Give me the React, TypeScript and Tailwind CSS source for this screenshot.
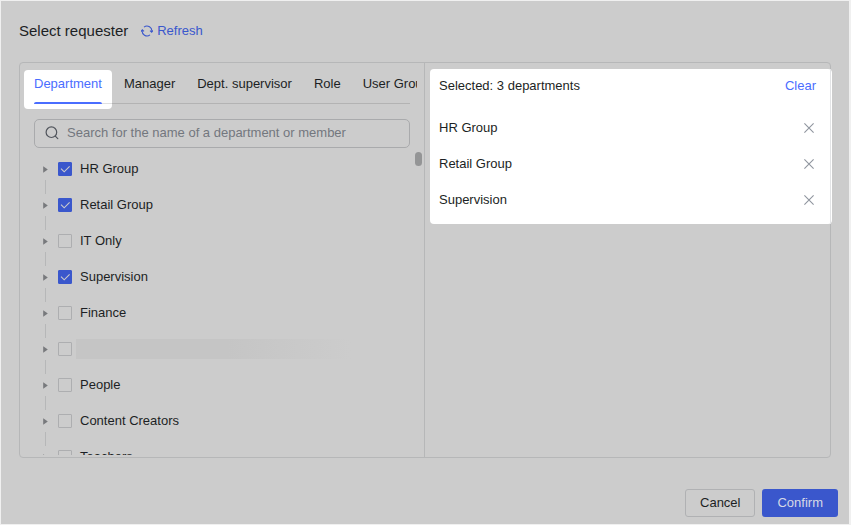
import { useState } from "react";

const tabs = ["Department", "Manager", "Dept. supervisor", "Role", "User Group"];

const departments = [
  { id: "hr", name: "HR Group" },
  { id: "retail", name: "Retail Group" },
  { id: "it", name: "IT Only" },
  { id: "supervision", name: "Supervision" },
  { id: "finance", name: "Finance" },
  { id: "hidden", name: "" },
  { id: "people", name: "People" },
  { id: "creators", name: "Content Creators" },
  { id: "teachers", name: "Teachers" },
];

function RefreshIcon() {
  return (
    <svg width="12" height="12" viewBox="0 0 12 12" fill="none" stroke="currentColor" strokeWidth="1.1">
      <path d="M3 2.1A4.9 4.9 0 0 1 10.8 6.8" />
      <path d="M9 9.9A4.9 4.9 0 0 1 1.2 5.2" />
      <path d="M9 5.6L10.7 7.2L12 5.4" />
      <path d="M3 6.4L1.3 4.8L0 6.6" />
    </svg>
  );
}

function SearchIcon() {
  return (
    <svg width="14" height="14" viewBox="0 0 14 14" fill="none" stroke="currentColor" strokeWidth="1.2" strokeLinecap="round">
      <circle cx="6.4" cy="6.2" r="5.3" />
      <path d="M10.3 10.1L12.8 12.6" />
    </svg>
  );
}

function CloseIcon() {
  return (
    <svg width="10" height="10" viewBox="0 0 10 10" fill="none" stroke="currentColor" strokeWidth="1.1">
      <path d="M0.4 0.4L9.6 9.6M9.6 0.4L0.4 9.6" />
    </svg>
  );
}

export default function App() {
  const [activeTab, setActiveTab] = useState("Department");
  const [selected, setSelected] = useState(["hr", "retail", "supervision"]);

  const toggle = (id: string) =>
    setSelected((ids) =>
      ids.includes(id) ? ids.filter((item) => item !== id) : [...ids, id]
    );

  const chosen = departments.filter((item) => selected.includes(item.id));

  return (
    <div className="flex h-screen bg-[#f0f0f0] p-px pr-0.5 font-['Liberation_Sans',Arial,sans-serif] text-[13px] leading-5 text-[#1c1f24]">
      <main className="flex min-w-0 flex-1 flex-col bg-[#cccccc] pt-5 pr-[18px] pb-[7px] pl-[18px]">
        <header className="flex items-center gap-[13px]">
          <h1 className="text-[15px]">Select requester</h1>
          <button type="button" className="flex items-center gap-1 text-[#3a57cc]">
            <RefreshIcon />
            Refresh
          </button>
        </header>

        <div className="mt-[21px] flex min-h-0 flex-1 rounded border border-[#b6b7b8]">
          <section className="flex w-1/2 min-w-0 flex-col border-r border-[#b6b7b8]">
            <div className="relative mr-[7px] flex h-[47px] shrink-0 overflow-hidden pt-[11px] pl-3.5">
              <div role="tablist" className="flex gap-[22px] whitespace-nowrap">
                {tabs.map((tab) => (
                  <button
                    key={tab}
                    type="button"
                    role="tab"
                    aria-selected={tab === activeTab}
                    onClick={() => setActiveTab(tab)}
                    className="relative flex h-[30px] items-start aria-selected:text-[#4a6dff]"
                  >
                    {tab === activeTab && (
                      <>
                        <span className="absolute -inset-x-2.5 -top-1 -bottom-[5px] rounded bg-white" />
                        <span className="absolute inset-x-0 bottom-0 z-10 h-0.5 rounded-t bg-[#4a6dff]" />
                      </>
                    )}
                    <span className="relative">{tab}</span>
                  </button>
                ))}
              </div>
              <div className="absolute right-[7px] bottom-1.5 left-3.5 h-px bg-black/12" />
            </div>

            <label className="mt-[9px] mr-3.5 ml-3.5 flex h-[29px] shrink-0 items-start gap-2 rounded-[5px] border border-[#a9aaac] pt-[3px] pl-2.5 text-[#51555c]">
              <span className="flex h-5 items-center">
                <SearchIcon />
              </span>
              <input
                type="search"
                aria-label="Search departments"
                placeholder="Search for the name of a department or member"
                className="h-5 min-w-0 flex-1 bg-transparent outline-none placeholder:text-[#73777e]"
              />
            </label>

            <div className="relative mt-[3px] mb-0.5 min-h-0 flex-1 overflow-hidden">
              <ul>
                {departments.map((item) => (
                  <li key={item.id} className="relative flex h-9 items-center pl-[23px]">
                    <button type="button" aria-label="Expand" className="w-[15px]">
                      <svg width="5" height="7" viewBox="0 0 5 7" fill="#77797c">
                        <path d="M0.2 0.2L4.8 3.5L0.2 6.8Z" />
                      </svg>
                    </button>
                    <label className="flex items-center">
                      <span className="relative mr-2 flex">
                        <input
                          type="checkbox"
                          aria-label={item.name || "Department"}
                          checked={selected.includes(item.id)}
                          onChange={() => toggle(item.id)}
                          className="peer size-3.5 appearance-none rounded-[1px] border border-[#adaeb0] checked:border-[#3a57cc] checked:bg-[#3a57cc]"
                        />
                        <svg
                          viewBox="0 0 14 14"
                          className="pointer-events-none absolute inset-0 hidden size-3.5 peer-checked:block"
                          fill="none"
                          stroke="#cccccc"
                          strokeWidth="1.1"
                        >
                          <path d="M3 6.6L6.2 9.8L11.6 4.4" />
                        </svg>
                      </span>
                      {item.name}
                    </label>
                    {!item.name && (
                      <span className="-ml-1 h-5 w-[275px] bg-linear-to-r from-[#c5c5c5] from-55% to-[#cccccc]" />
                    )}
                    <span className="absolute -bottom-[7px] left-[25px] h-3.5 w-px bg-[#b6b7b8]" />
                  </li>
                ))}
              </ul>
              <div className="absolute top-px right-0.5 h-3.5 w-[7px] rounded-full bg-[#949596]" />
            </div>
          </section>

          <section className="w-1/2 min-w-0 flex-1">
            <div className="relative mt-1.5 -mr-0.5 ml-[5px] rounded bg-white pt-[7px] pr-4 pb-1.5 pl-[9px]">
              <div className="mb-3.5 flex items-center justify-between">
                <h2>Selected: {chosen.length} departments</h2>
                <button type="button" onClick={() => setSelected([])} className="text-[#4a6dff]">
                  Clear
                </button>
              </div>
              <ul>
                {chosen.map((item) => (
                  <li key={item.id} className="flex h-9 items-center justify-between">
                    {item.name}
                    <button
                      type="button"
                      aria-label={`Remove ${item.name}`}
                      onClick={() => toggle(item.id)}
                      className="pr-0.5 text-[#8f959e]"
                    >
                      <CloseIcon />
                    </button>
                  </li>
                ))}
              </ul>
              <span className="absolute inset-y-0 right-px w-px bg-[#e3e4e6]" />
            </div>
          </section>
        </div>

        <footer className="-mr-[7px] mt-[31px] flex justify-end gap-[7px]">
          <button type="button" className="h-7 rounded-[3px] border border-[#b0b1b3] px-3.5">
            Cancel
          </button>
          <button type="button" className="h-7 rounded-[3px] bg-[#3a57cc] px-[15px] text-[#d6d9e6]">
            Confirm
          </button>
        </footer>
      </main>
    </div>
  );
}
